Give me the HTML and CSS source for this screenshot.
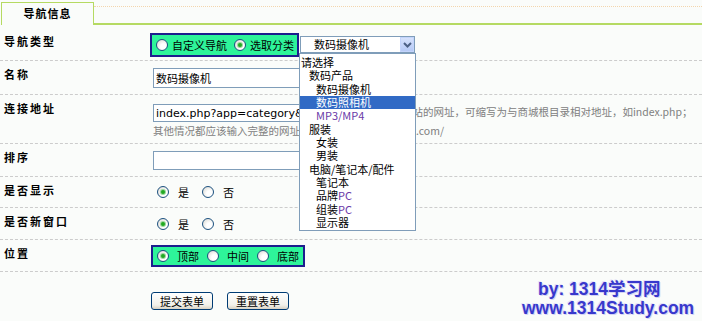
FILE: index.html
```html
<!DOCTYPE html>
<html lang="zh-CN">
<head>
    <meta charset="UTF-8">
    <title>导航信息</title>
    <link rel="stylesheet" href="styles.css">
</head>
<body>
    <div class="tabs">
        <span class="tab">导航信息</span>
        <span class="tab-line"></span>
    </div>

    <div class="form">
        <div class="form-row row-type">
            <div class="form-label">导航类型</div>
            <div class="form-field">
                <span class="radio-group">
                    <label class="radio-item"><span class="radio"></span>自定义导航</label>
                    <label class="radio-item"><span class="radio on"></span>选取分类</label>
                </span>
                <div class="select-box">
                    <span class="select-text">数码摄像机</span>
                    <span class="select-arrow">
                        <svg width="9" height="6" viewBox="0 0 9 6"><polyline points="1,1 4.5,4.5 8,1" fill="none" stroke="#4d6185" stroke-width="2"/></svg>
                    </span>
                    <!-- opened option list -->
                    <ul class="select-list">
                        <li>请选择</li>
                        <li class="lv1">数码产品</li>
                        <li class="lv2">数码摄像机</li>
                        <li class="lv2 selected">数码照相机</li>
                        <li class="lv2"><span class="latin">MP3/MP4</span></li>
                        <li class="lv1">服装</li>
                        <li class="lv2">女装</li>
                        <li class="lv2">男装</li>
                        <li class="lv1">电脑/笔记本/配件</li>
                        <li class="lv2">笔记本</li>
                        <li class="lv2">品牌<span class="latin">PC</span></li>
                        <li class="lv2">组装<span class="latin">PC</span></li>
                        <li class="lv2">显示器</li>
                    </ul>
                </div>
            </div>
        </div>

        <div class="form-row row-name">
            <div class="form-label">名称</div>
            <div class="form-field">
                <input type="text" class="text-input input-name" value="数码摄像机">
            </div>
        </div>

        <div class="form-row row-link">
            <div class="form-label">连接地址</div>
            <div class="form-field field-link">
                <input type="text" class="text-input input-link" value="index.php?app=category&amp;cate_id=3">
                <span class="hint">如果是本站的网址，可缩写为与商城根目录相对地址，如index.php；<br>其他情况都应该输入完整的网址，如http://www.shopnz.com/</span>
            </div>
        </div>

        <div class="form-row row-sort">
            <div class="form-label">排序</div>
            <div class="form-field">
                <input type="text" class="text-input input-sort" value="">
            </div>
        </div>

        <div class="form-row row-show">
            <div class="form-label">是否显示</div>
            <div class="form-field radio-line">
                <label class="radio-item"><span class="radio on"></span>是</label>
                <label class="radio-item"><span class="radio"></span>否</label>
            </div>
        </div>

        <div class="form-row row-new">
            <div class="form-label">是否新窗口</div>
            <div class="form-field radio-line">
                <label class="radio-item"><span class="radio on"></span>是</label>
                <label class="radio-item"><span class="radio"></span>否</label>
            </div>
        </div>

        <div class="form-row row-pos">
            <div class="form-label">位置</div>
            <div class="form-field">
                <span class="radio-group pos-group">
                    <label class="radio-item"><span class="radio on"></span>顶部</label>
                    <label class="radio-item"><span class="radio"></span>中间</label>
                    <label class="radio-item"><span class="radio"></span>底部</label>
                </span>
            </div>
        </div>

        <div class="form-actions">
            <button type="button" class="btn">提交表单</button>
            <button type="button" class="btn">重置表单</button>
        </div>
    </div>

    <div class="watermark">
        <div class="wm-top">by: 1314学习网</div>
        <div>www.1314Study.com</div>
    </div>
</body>
</html>
```

FILE: styles.css
```css
/* Basic Reset */
* {
    margin: 0;
    padding: 0;
    box-sizing: border-box;
}

body {
    position: relative;
    height: 321px;
    overflow: hidden;
    background: #fafcfa;
    font-family: "Noto Sans CJK SC", sans-serif;
    font-size: 11px;
    color: #000;
}

/* Tab header */
.tabs {
    display: flex;
    height: 25px;
}

.tab {
    width: 93px;
    margin: 2px 0 0 1px;
    border: 1px solid #b5da62;
    border-bottom: none;
    text-align: center;
    font-weight: bold;
    letter-spacing: 1px;
    line-height: 20px;
}

.tab-line {
    flex: 1;
    margin-top: 6px;
    border-top: 1px dotted #f3d6ae;
    border-bottom: 2px solid #b5da62;
}

/* Form rows */
.form-row {
    display: flex;
    border-bottom: 1px dashed #cccccc;
}

.form-label {
    width: 150px;
    flex-shrink: 0;
    padding: 6px 0 0 4px;
    font-weight: bold;
    letter-spacing: 2px;
    line-height: 14px;
}

.form-field {
    flex: 1;
    display: flex;
    align-items: center;
}

.row-type { height: 36px; }
.row-type .form-label { padding-top: 9px; }
.row-type .form-field { padding-top: 4px; }
.row-name { height: 34px; }
.row-link { height: 49px; }
.row-sort { height: 33px; }
.row-show { height: 31px; }
.row-new { height: 32px; }
.row-pos { height: 32px; }
.row-pos .form-field { padding-left: 1px; }

/* Radios */
.radio-item {
    display: inline-flex;
    align-items: center;
    line-height: 14px;
}

.radio {
    position: relative;
    display: inline-block;
    width: 12px;
    height: 12px;
    border: 1px solid #1c5180;
    border-radius: 50%;
    background: radial-gradient(circle at 65% 65%, #ffffff 30%, #d4d4cc 100%);
}

.radio.on::after {
    content: "";
    position: absolute;
    left: 3px;
    top: 3px;
    width: 4px;
    height: 4px;
    border-radius: 50%;
    background: #22a922;
    box-shadow: 0 0 0 1px #9ad89a;
}

.radio-group {
    display: flex;
    align-items: center;
    height: 24px;
    padding: 0 3px 0 4px;
    background: #2ef49a;
    border: 2px solid #1d1d8e;
}

.radio-group .radio { margin-right: 4px; }
.radio-group .radio-item + .radio-item { margin-left: 7px; }

.pos-group {
    height: 22px;
    padding-right: 4px;
}

.pos-group .radio { margin-right: 8px; }
.pos-group .radio-item + .radio-item { margin-left: 8px; }

.radio-line { padding-left: 7px; }
.radio-line .radio { margin-right: 9px; }
.radio-line .radio-item + .radio-item { margin-left: 13px; }

/* Fake select with open list */
.select-box {
    position: relative;
    display: flex;
    align-items: center;
    width: 115px;
    height: 17px;
    margin-left: 1px;
    border: 1px solid #7f9db9;
    background: #fff;
}

.select-text {
    flex: 1;
    padding-left: 13px;
    line-height: 15px;
}

.select-arrow {
    display: flex;
    align-items: center;
    justify-content: center;
    width: 14px;
    height: 15px;
    background: linear-gradient(#d6e2fc, #b6caf6);
    border: 1px solid #c3d4fb;
}

.select-list {
    position: absolute;
    left: -2px;
    top: 16px;
    z-index: 10;
    width: 117px;
    padding: 2px 0 1px;
    list-style: none;
    background: #fff;
    border: 1px solid #7f9db9;
}

.select-list li {
    height: 13.33px;
    line-height: 13.33px;
    padding-left: 1px;
    white-space: nowrap;
}

.select-list .lv1 { padding-left: 9px; }
.select-list .lv2 { padding-left: 16px; }

.select-list .selected {
    background: #316ac5;
    color: #fff;
}

.select-list .latin {
    color: #6a3aa8;
}

/* Text inputs */
.text-input {
    height: 20px;
    margin-left: 3px;
    padding: 0 2px;
    border: 1px solid #7f9db9;
    background: #fff;
    font-family: "DejaVu Sans", "Noto Sans CJK SC", sans-serif;
    font-size: 11px;
    color: #000;
    outline: none;
}

.input-name { width: 200px; }
.input-sort { width: 200px; height: 19px; }

.field-link {
    display: block;
    padding: 8px 0 0 3px;
    line-height: 17px;
    white-space: nowrap;
}

.input-link {
    width: 211px;
    height: 18px;
    margin-left: 0;
    vertical-align: middle;
}

.hint {
    margin-left: 4px;
    font-size: 10.5px;
    color: #808080;
}

/* Buttons */
.form-actions {
    display: flex;
    gap: 14px;
    padding: 20px 0 0 151px;
}

.btn {
    width: 62px;
    height: 18px;
    border: 1px solid #003c74;
    border-radius: 3px;
    background: linear-gradient(#ffffff, #f2f1ea 75%, #d8d2c4);
    font-family: "Noto Sans CJK SC", sans-serif;
    font-size: 11px;
    line-height: 16px;
    color: #000;
}

/* Site watermark */
.watermark {
    position: absolute;
    left: 522px;
    top: 280px;
    font-family: "Liberation Sans", "Noto Sans CJK SC", sans-serif;
    font-weight: bold;
    font-size: 17.5px;
    line-height: 19px;
    color: #3838cc;
    text-shadow: 1px 1px 0 #d4d4f4, -1px -1px 0 #e4e4f8;
}

.wm-top {
    padding-left: 16px;
}
```
